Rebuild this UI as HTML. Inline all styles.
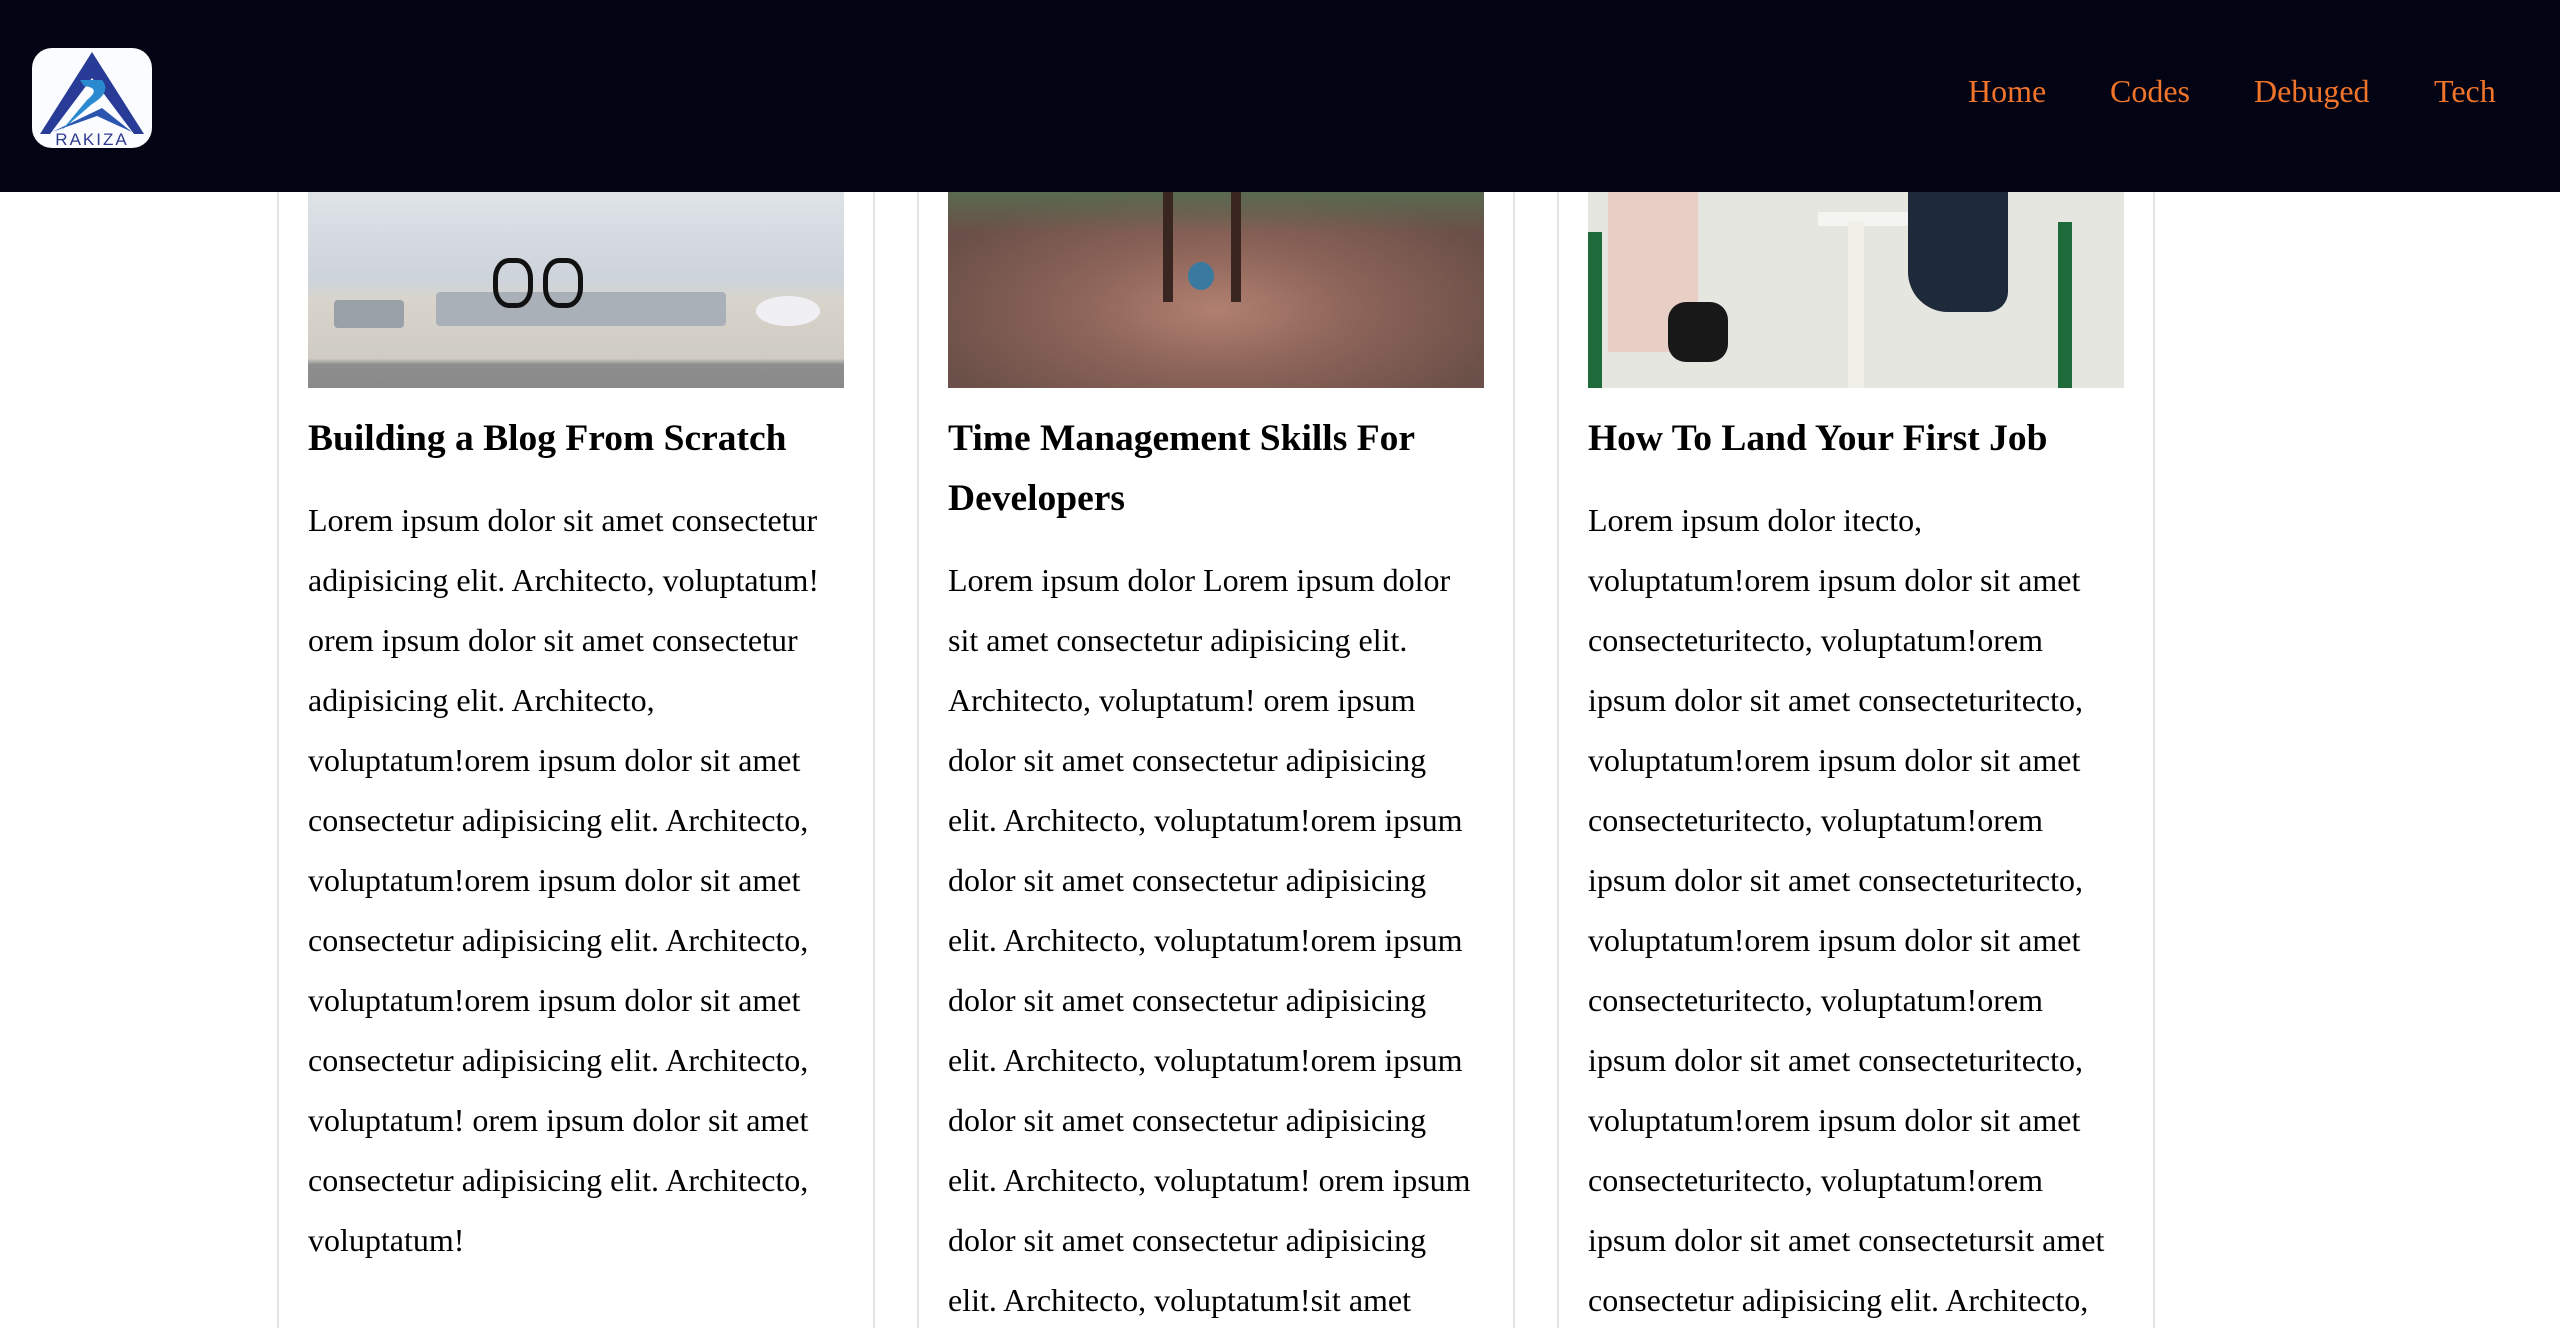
<!DOCTYPE html>
<html><head><meta charset="utf-8"><style>
*{margin:0;padding:0;box-sizing:border-box}
html,body{width:2560px;height:1328px;overflow:hidden}
body{background:#fff;font-family:"Liberation Serif",serif;position:relative}
.hdr{position:absolute;left:0;top:0;width:2560px;height:192px;background:#020414;z-index:2}
.logo{position:absolute;left:32px;top:48px;width:120px;height:100px;background:#fbfcff;border-radius:20px;overflow:hidden}
.nav{position:absolute;top:73px;font-size:32px;color:#f0742a}
.card{position:absolute;top:150px;width:598px;height:1178px;border:2px solid #e2e2e2;border-top:none;border-bottom:none}
.img{position:absolute;left:29px;top:42px;width:536px;height:196px}
.t{position:absolute;left:29px;top:259px;width:540px;font-size:37.5px;font-weight:bold;line-height:60px;color:#000}
.b{position:absolute;left:29px;width:530px;font-size:32px;line-height:60px;color:#000}
</style></head><body>
<div class="hdr">
<div class="logo"><svg width="120" height="100" viewBox="0 0 120 100">
<path d="M60 4 L8 86 L18 86 L60 30 Z" fill="#283b96"/>
<path d="M60 4 L112 86 L102 86 L60 30 Z" fill="#283b96"/>
<path d="M20 84 L70 60 L100 84 L65 68 Z" fill="#2b56b0"/>
<path d="M48 32 L70 32 Q80 44 60 56 L30 82 L55 52 Q70 40 52 38 Z" fill="#2a8ad0"/>
<text x="60" y="97" text-anchor="middle" font-family="Liberation Sans,sans-serif" font-size="17" fill="#2e3a8c" letter-spacing="2">RAKIZA</text>
</svg></div>
<div class="nav" style="left:1968px">Home</div>
<div class="nav" style="left:2110px">Codes</div>
<div class="nav" style="left:2254px">Debuged</div>
<div class="nav" style="left:2434px">Tech</div>
</div>

<div class="card" style="left:277px">
<div class="img" style="background:linear-gradient(#dfe3e8 0%,#cdd3db 45%,#d8d4cc 55%,#cfccc4 85%,#8e8e8e 88%,#8a8a8a 100%)">
<div style="position:absolute;left:128px;top:100px;width:290px;height:34px;background:#aab0b8;border-radius:4px"></div>
<div style="position:absolute;left:26px;top:108px;width:70px;height:28px;background:#9aa0a8;border-radius:4px"></div>
<div style="position:absolute;left:448px;top:104px;width:64px;height:30px;background:#f0f0f4;border-radius:50%"></div>
<div style="position:absolute;left:185px;top:66px;width:40px;height:50px;border:5px solid #111;border-radius:40%"></div>
<div style="position:absolute;left:235px;top:66px;width:40px;height:50px;border:5px solid #111;border-radius:40%"></div>
</div>
<div class="t">Building a Blog From Scratch</div>
<div class="b" style="top:340px;width:540px">Lorem ipsum dolor sit amet consectetur adipisicing elit. Architecto, voluptatum! orem ipsum dolor sit amet consectetur adipisicing elit. Architecto, voluptatum!orem ipsum dolor sit amet consectetur adipisicing elit. Architecto, voluptatum!orem ipsum dolor sit amet consectetur adipisicing elit. Architecto, voluptatum!orem ipsum dolor sit amet consectetur adipisicing elit. Architecto, voluptatum! orem ipsum dolor sit amet consectetur adipisicing elit. Architecto, voluptatum!</div>
</div>

<div class="card" style="left:917px">
<div class="img" style="background:radial-gradient(ellipse at 50% 60%,#b08070,#8a6258 40%,#6a5048 80%);">
<div style="position:absolute;left:0;top:0;width:536px;height:40px;background:linear-gradient(#5a6a50,rgba(120,100,90,0))"></div>
<div style="position:absolute;left:215px;top:0;width:10px;height:110px;background:#3a2620"></div>
<div style="position:absolute;left:283px;top:0;width:10px;height:110px;background:#3a2620"></div>
<div style="position:absolute;left:240px;top:70px;width:26px;height:28px;background:#3a7aa0;border-radius:50%"></div>
</div>
<div class="t">Time Management Skills For Developers</div>
<div class="b" style="top:400px">Lorem ipsum dolor Lorem ipsum dolor sit amet consectetur adipisicing elit. Architecto, voluptatum! orem ipsum dolor sit amet consectetur adipisicing elit. Architecto, voluptatum!orem ipsum dolor sit amet consectetur adipisicing elit. Architecto, voluptatum!orem ipsum dolor sit amet consectetur adipisicing elit. Architecto, voluptatum!orem ipsum dolor sit amet consectetur adipisicing elit. Architecto, voluptatum! orem ipsum dolor sit amet consectetur adipisicing elit. Architecto, voluptatum!sit amet</div>
</div>

<div class="card" style="left:1557px">
<div class="img" style="background:#e6e6e0">
<div style="position:absolute;left:20px;top:0;width:90px;height:160px;background:#e8cfc6"></div>
<div style="position:absolute;left:80px;top:110px;width:60px;height:60px;background:#181818;border-radius:30%"></div>
<div style="position:absolute;left:0;top:40px;width:14px;height:156px;background:#1e6a3a"></div>
<div style="position:absolute;left:230px;top:20px;width:160px;height:14px;background:#f4f4f0"></div>
<div style="position:absolute;left:260px;top:30px;width:16px;height:166px;background:#f0efe8"></div>
<div style="position:absolute;left:320px;top:0;width:100px;height:120px;background:#1e2a3a;border-radius:0 0 20px 40px"></div>
<div style="position:absolute;left:470px;top:30px;width:14px;height:166px;background:#1e6a3a"></div>
</div>
<div class="t">How To Land Your First Job</div>
<div class="b" style="top:340px;width:540px">Lorem ipsum dolor itecto, voluptatum!orem ipsum dolor sit amet consecteturitecto, voluptatum!orem ipsum dolor sit amet consecteturitecto, voluptatum!orem ipsum dolor sit amet consecteturitecto, voluptatum!orem ipsum dolor sit amet consecteturitecto, voluptatum!orem ipsum dolor sit amet consecteturitecto, voluptatum!orem ipsum dolor sit amet consecteturitecto, voluptatum!orem ipsum dolor sit amet consecteturitecto, voluptatum!orem ipsum dolor sit amet consectetursit amet consectetur adipisicing elit. Architecto,</div>
</div>
</body></html>
